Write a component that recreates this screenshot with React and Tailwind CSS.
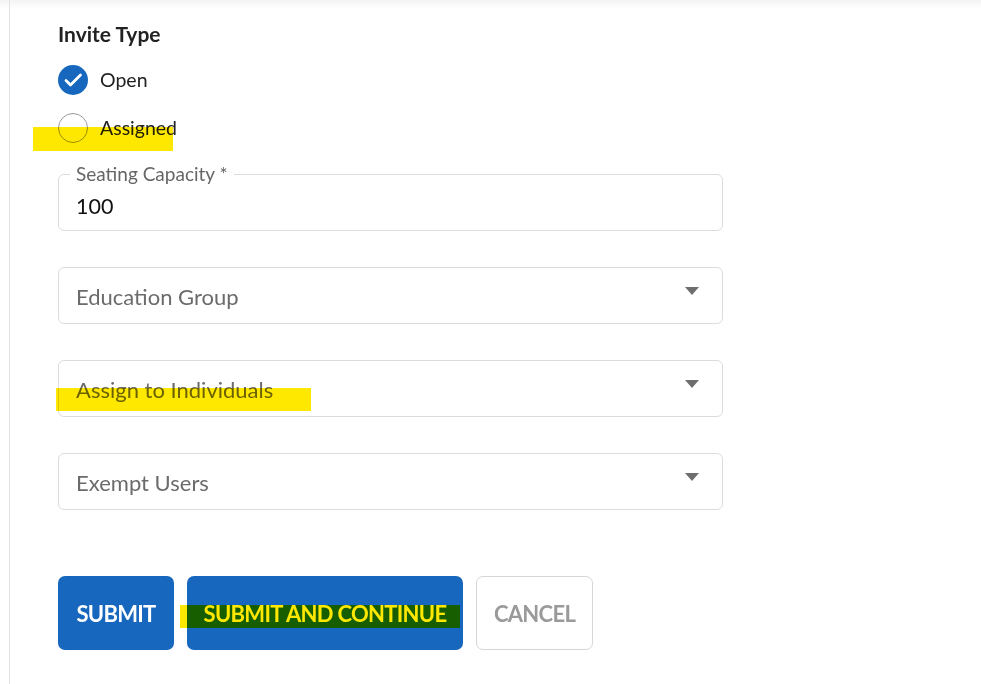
import { useState } from 'react';

const font = { fontFamily: '"Source Sans Pro", Lato, "Liberation Sans", sans-serif' };

// marker-pen highlight laid over text (multiply, like a highlighter)
function Highlight({ className }) {
  return <span className={`pointer-events-none absolute bg-[#ffe800] mix-blend-multiply ${className}`} />;
}

function Radio({ checked, label, onClick }) {
  return (
    <button type="button" onClick={onClick} className="flex items-center gap-[12px] h-[30px]">
      {checked ? (
        <span className="flex items-center justify-center w-[30px] h-[30px] rounded-full bg-[#1767be]">
          <svg viewBox="0 0 24 24" className="w-[24px] h-[24px]" fill="none" stroke="white" strokeWidth="2.8" strokeLinecap="round" strokeLinejoin="round">
            <path d="M5 12.5l4.5 4.5L19.5 7" />
          </svg>
        </span>
      ) : (
        <span className="w-[30px] h-[30px] rounded-full border border-[#9a9a9a]" />
      )}
      <span className="text-[19.5px] text-[#222]">{label}</span>
    </button>
  );
}

function SelectBox({ label }) {
  return (
    <div className="flex items-center justify-between h-[57px] w-[665px] rounded-[6px] border border-[#dcdcdc] pl-[17px] pr-[23px]">
      <span className="text-[22px] text-[#6b6b6b] pt-[2px]">{label}</span>
      <svg viewBox="0 0 14 8" className="w-[14px] h-[8px] -mt-[9px]" fill="#6e6e6e">
        <path d="M0 0h14L7 8z" />
      </svg>
    </div>
  );
}

export default function App() {
  const [invite, setInvite] = useState('open');

  return (
    <div style={font} className="min-h-screen bg-white flex shadow-[inset_0_12px_10px_-10px_rgba(0,0,0,0.07)]">
      <div className="w-[9px] shrink-0" />
      <main className="relative flex-1 border-l border-[#e2e2e2] pl-[48px] pt-[20px] pb-[40px]">
        <h2 className="text-[21px] font-bold text-[#222] leading-[28px]">Invite Type</h2>

        <div className="mt-[17px] flex flex-col gap-[18px] items-start">
          <Radio checked={invite === 'open'} label="Open" onClick={() => setInvite('open')} />
          <Radio checked={invite === 'assigned'} label="Assigned" onClick={() => setInvite('assigned')} />
        </div>

        <fieldset className="mt-[21px] w-[665px] h-[67px] rounded-[6px] border border-[#dcdcdc] pl-[11px] pr-[17px]">
          <legend className="px-[6px] text-[19px] leading-[20px] text-[#666]">Seating Capacity *</legend>
          <div className="text-[21.5px] leading-[28px] text-[#111] pl-[6px] mt-[8px]">100</div>
        </fieldset>

        <div className="mt-[36px] flex flex-col gap-[36px]">
          <SelectBox label="Education Group" />
          <SelectBox label="Assign to Individuals" />
          <SelectBox label="Exempt Users" />
        </div>

        <div className="mt-[66px] flex gap-[13px] text-[22px] font-bold tracking-[-0.7px] whitespace-nowrap">
          <button className="h-[74px] w-[116px] rounded-[7px] bg-[#1767be] text-white">SUBMIT</button>
          <button className="h-[74px] w-[276px] rounded-[7px] bg-[#1767be] text-white">SUBMIT AND CONTINUE</button>
          <button className="h-[74px] w-[117px] rounded-[7px] border border-[#d6d6d6] bg-white text-[#9a9a9a]">CANCEL</button>
        </div>

        <Highlight className="left-[23px] top-[127px] w-[140px] h-[24px]" />
        <Highlight className="left-[46px] top-[388px] w-[255px] h-[23px]" />
        <Highlight className="left-[170px] top-[605px] w-[280px] h-[23px]" />
      </main>
    </div>
  );
}
